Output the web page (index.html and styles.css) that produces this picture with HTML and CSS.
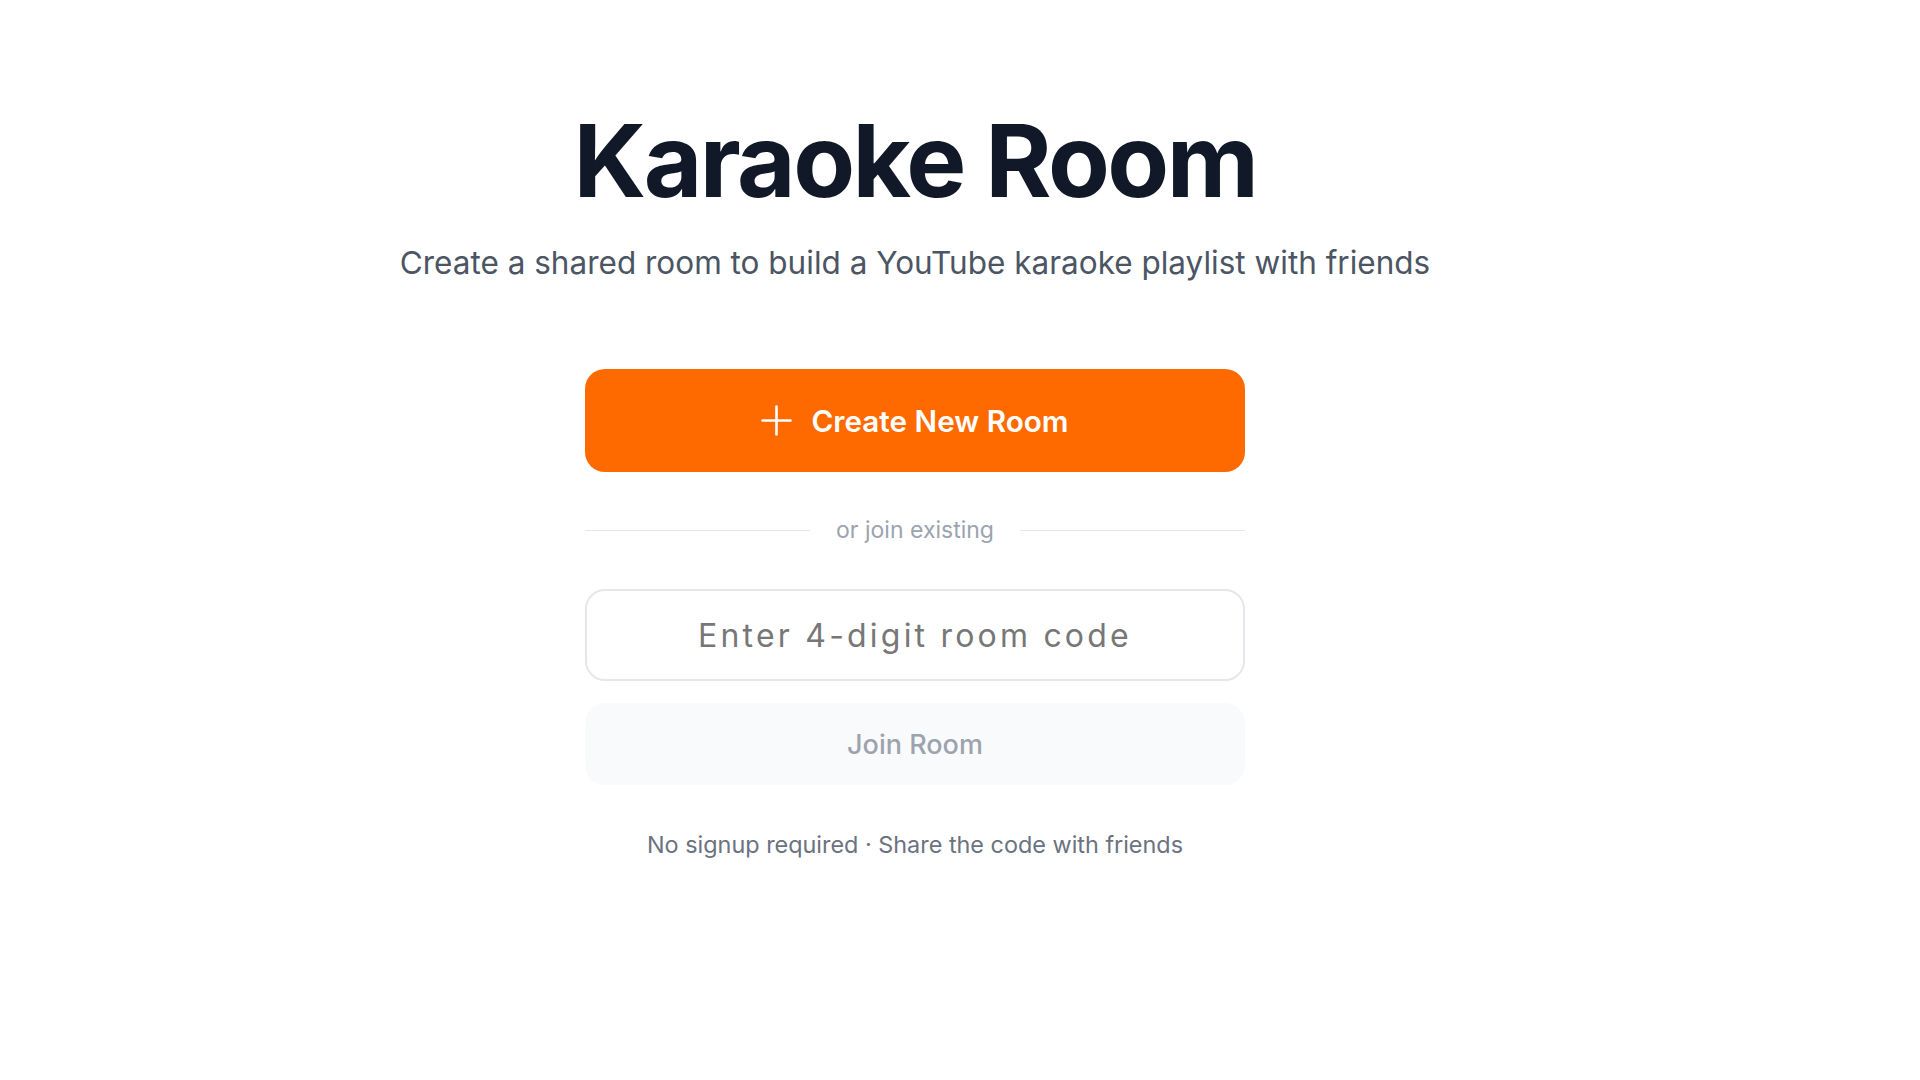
FILE: index.html
```html
<!DOCTYPE html>
<html lang="en">
<head>
<meta charset="utf-8">
<title>Karaoke Room</title>
<link rel="stylesheet" href="styles.css">
</head>
<body>
<main class="page">
  <h1 class="title">Karaoke Room</h1>
  <p class="subtitle">Create a shared room to build a YouTube karaoke playlist with friends</p>
  <div class="panel">
    <button class="create-btn" type="button">
      <svg class="plus" width="31" height="31" viewBox="0 0 31 31" aria-hidden="true">
        <path d="M1.5 15.5h28M15.5 1.5v28" stroke="#ffffff" stroke-width="2.6" stroke-linecap="round" fill="none"/>
      </svg>
      <span>Create New Room</span>
    </button>
    <div class="divider">
      <span class="line"></span>
      <span class="divider-text">or join existing</span>
      <span class="line"></span>
    </div>
    <input class="code-input" type="text" placeholder="Enter 4-digit room code">
    <button class="join-btn" type="button">Join Room</button>
    <p class="footnote">No signup required · Share the code with friends</p>
  </div>
</main>
</body>
</html>
```
FILE: styles.css
```css
* { box-sizing: border-box; }
html, body { margin: 0; padding: 0; background: #ffffff; }
body {
  font-family: "Inter", "Noto Sans", "Liberation Sans", sans-serif;
  color: #111827;
}
.page {
  display: flex;
  flex-direction: column;
  align-items: center;
  padding: 100px 90px 0 0;
}
.title {
  margin: 0;
  font-size: 101px;
  font-weight: 700;
  letter-spacing: -0.025em;
  line-height: 1.2;
  color: #111827;
}
.subtitle {
  margin: 20px 0 0;
  font-size: 31.5px;
  line-height: 1.4;
  color: #4b5563;
}
.panel {
  width: 660px;
  display: flex;
  flex-direction: column;
  margin-top: 84px;
}
.create-btn {
  height: 103px;
  border: none;
  border-radius: 20px;
  background: #ff6a00;
  color: #ffffff;
  font-family: inherit;
  font-size: 29.7px;
  font-weight: 600;
  display: flex;
  align-items: center;
  justify-content: center;
  gap: 19px;
  padding-left: 6px;
  cursor: pointer;
}
.plus { display: block; }
.divider {
  display: flex;
  align-items: center;
  gap: 26px;
  margin: 44px 0 0;
  height: 28px;
}
.line { flex: 1; height: 1px; background: #e5e7eb; }
.divider-text { font-size: 23px; color: #9ca3af; }
.code-input {
  margin-top: 45px;
  height: 92px;
  border: 2px solid #e5e7eb;
  border-radius: 20px;
  text-align: center;
  font-family: inherit;
  font-size: 32px;
  letter-spacing: 0.1em;
  color: #111827;
  outline: none;
  background: #ffffff;
}
.code-input::placeholder { color: #777777; }
.join-btn {
  margin-top: 22px;
  height: 82px;
  border: none;
  border-radius: 20px;
  background: #f9fafb;
  color: #9ca3af;
  font-family: inherit;
  font-size: 27px;
  font-weight: 500;
}
.footnote {
  margin: 45px 0 0;
  text-align: center;
  font-size: 23.4px;
  color: #6b7280;
}
```
